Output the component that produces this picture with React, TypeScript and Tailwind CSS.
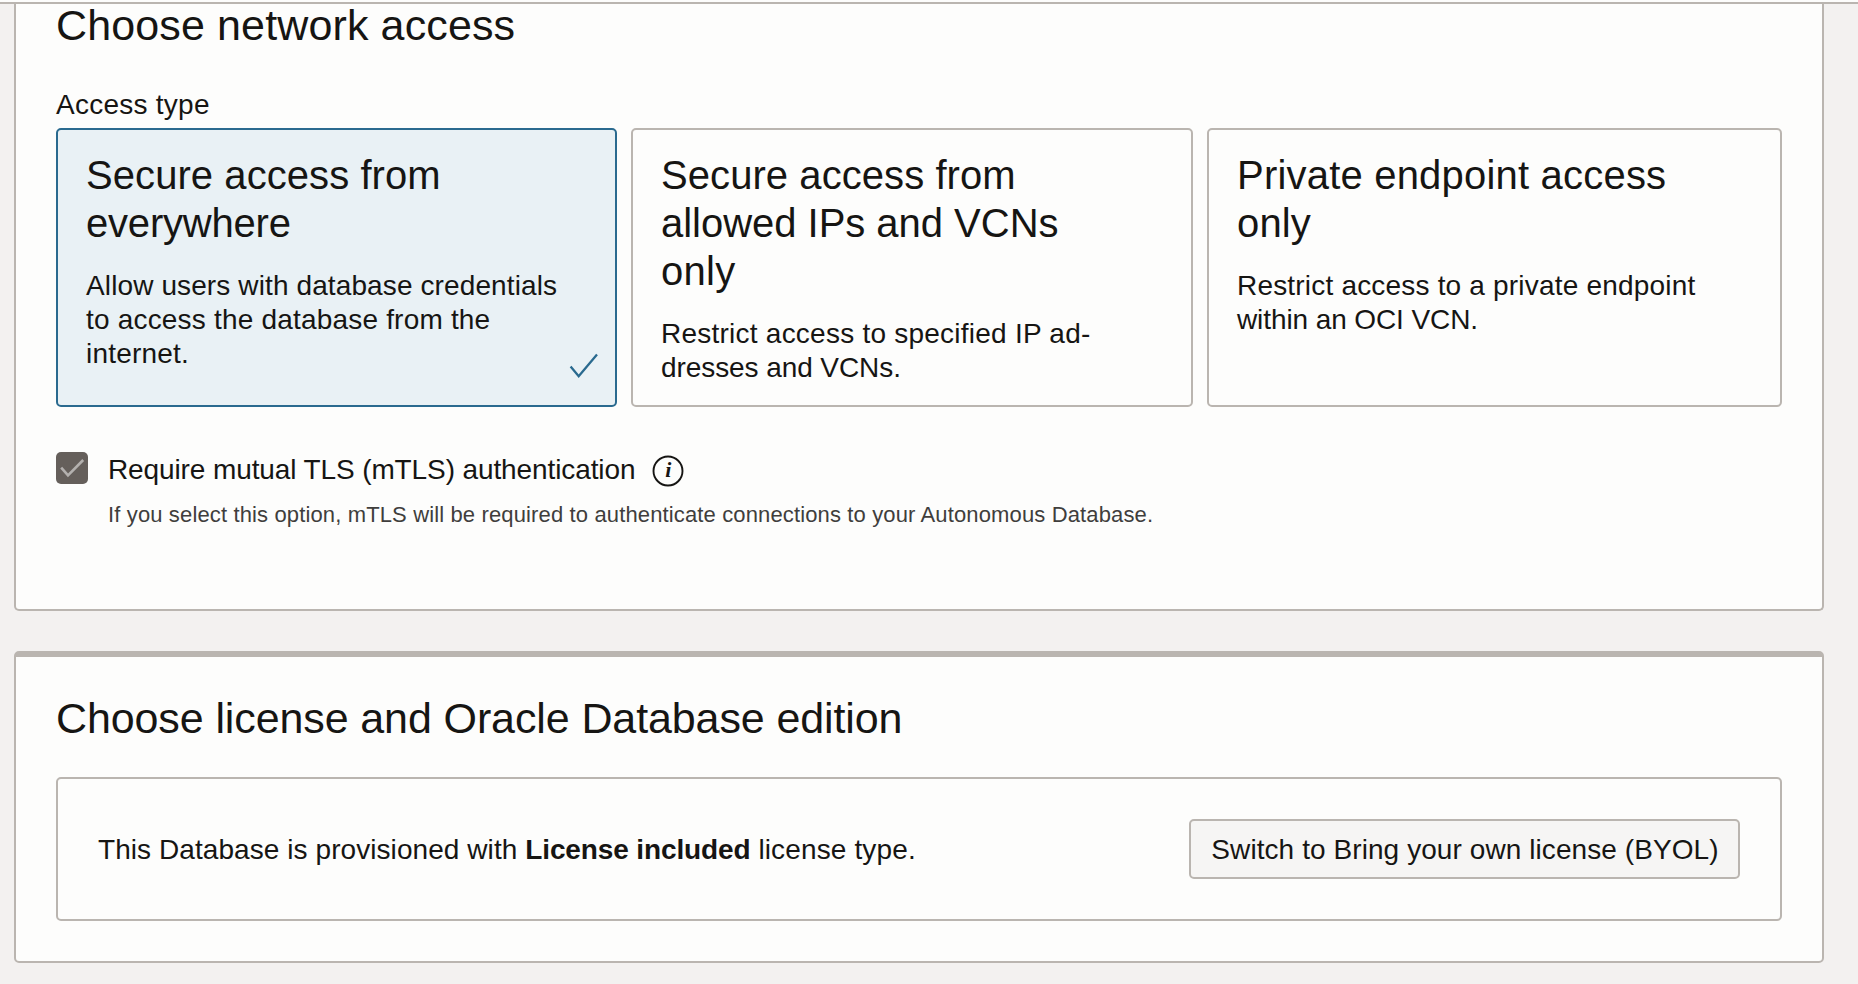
import React from "react";

type Line = { text: string; className: string };

type AccessOption = {
  title: Line[];
  description: Line[];
  width: string;
  selected?: boolean;
};

const accessOptions: AccessOption[] = [
  {
    title: [
      { text: "Secure access from", className: "tracking-[0.07px]" },
      { text: "everywhere", className: "tracking-[-0.2px]" },
    ],
    description: [
      { text: "Allow users with database credentials", className: "tracking-[0.115px]" },
      { text: "to access the database from the", className: "tracking-[0.191px]" },
      { text: "internet.", className: "tracking-[0.2px]" },
    ],
    width: "w-[561px]",
    selected: true,
  },
  {
    title: [
      { text: "Secure access from", className: "tracking-[0.07px]" },
      { text: "allowed IPs and VCNs", className: "tracking-[-0.025px]" },
      { text: "only", className: "tracking-[0.25px]" },
    ],
    description: [
      { text: "Restrict access to specified IP ad-", className: "tracking-[0.238px]" },
      { text: "dresses and VCNs.", className: "tracking-[-0.08px]" },
    ],
    width: "w-[562px]",
  },
  {
    title: [
      { text: "Private endpoint access", className: "tracking-[0.2px]" },
      { text: "only", className: "tracking-[0.15px]" },
    ],
    description: [
      { text: "Restrict access to a private endpoint", className: "tracking-[0.19px]" },
      { text: "within an OCI VCN.", className: "tracking-[-0.1px]" },
    ],
    width: "w-[575px]",
  },
];

function Lines({ lines }: { lines: Line[] }) {
  return (
    <>
      {lines.map((line) => (
        <span key={line.text} className={`block whitespace-nowrap ${line.className}`}>
          {line.text}
        </span>
      ))}
    </>
  );
}

function AccessCard({ option }: { option: AccessOption }) {
  const colors = option.selected
    ? "border-[#2a6a8f] bg-[#e9f1f5]"
    : "border-[#bab5b0] bg-[#fdfdfc]";
  return (
    <button
      type="button"
      className={`relative flex flex-col items-start rounded-[5px] border-2 pt-[21px] pl-7 text-left ${option.width} ${colors}`}
    >
      <h3 className="text-[40px] leading-[48px]">
        <Lines lines={option.title} />
      </h3>
      <p className="mt-[22px] text-[28px] leading-[34px]">
        <Lines lines={option.description} />
      </p>
      {option.selected && (
        <svg
          className="absolute right-[16px] bottom-[25px] h-[28px] w-[30px]"
          viewBox="0 0 30 28"
          fill="none"
          stroke="#2a6a8f"
          strokeWidth="2.3"
        >
          <path d="M1.6 14.4 9.7 24.2 28 2.4" />
        </svg>
      )}
    </button>
  );
}

function InfoIcon() {
  return (
    <svg className="h-8 w-8" viewBox="0 0 32 32">
      <circle cx="16" cy="16" r="14.5" fill="none" stroke="#161513" strokeWidth="1.9" />
      <text
        x="16.2"
        y="22.4"
        textAnchor="middle"
        className="fill-[#161513] font-['Liberation_Serif',serif] text-[22px] font-bold italic"
      >
        i
      </text>
    </svg>
  );
}

export default function App() {
  return (
    <div className="flex h-[984px] w-[1858px] flex-col overflow-hidden bg-[#f3f1f0] font-['Liberation_Sans',Arial,sans-serif] text-[#161513]">
      <header className="h-1 shrink-0 border-b-2 border-[#bab5b0] bg-[#fdfdfc]" />
      <main className="flex flex-col gap-10 pr-[34px] pl-[14px]">
        <section className="h-[607px] rounded-b-[5px] border-2 border-t-0 border-[#bab5b0] bg-[#fdfdfc] px-10">
          <h2 className="text-[43px] leading-[42px] tracking-[0.13px]">Choose network access</h2>
          <p className="mt-[42px] text-[28px] leading-[34px] tracking-[0.25px]">Access type</p>
          <div className="mt-[6px] flex h-[279px] gap-[14px]">
            {accessOptions.map((option) => (
              <AccessCard key={option.title[0].text + option.title[1].text} option={option} />
            ))}
          </div>
          <div className="mt-[45px] flex items-start">
            <div className="flex h-8 w-8 items-center justify-center rounded-[5px] bg-[#655f5b]">
              <svg className="h-8 w-8" viewBox="0 0 32 32" fill="none" stroke="#b3b0ae" strokeWidth="2.6">
                <path d="M5.2 15.6 12 23.4 27.2 8" />
              </svg>
            </div>
            <div className="ml-5">
              <div className="mt-px flex h-[34px] items-center">
                <span className="text-[28px] leading-[34px] tracking-[-0.11px]">
                  Require mutual TLS (mTLS) authentication
                </span>
                <span className="mt-[2px] ml-[17px]">
                  <InfoIcon />
                </span>
              </div>
              <p className="mt-[14px] text-[22px] leading-[28px] tracking-[0.136px] text-[#403e3c]">
                If you select this option, mTLS will be required to authenticate connections to your Autonomous
                Database.
              </p>
            </div>
          </div>
        </section>

        <section className="h-[312px] rounded-[5px] border-2 border-t-[6px] border-[#bab5b0] bg-[#fdfdfc] px-10 pt-[37px]">
          <h2 className="text-[43px] leading-[48px] tracking-[-0.11px]">
            Choose license and Oracle Database edition
          </h2>
          <div className="mt-[35px] flex h-[144px] items-center justify-between rounded-[5px] border-2 border-[#bab5b0] px-10">
            <p className="mt-[2px] text-[28px] leading-[34px] tracking-[0.07px]">
              This Database is provisioned with{" "}
              <strong className="font-bold tracking-[-0.12px]">License included</strong>{" "}
              <span className="tracking-[0.14px]">license type.</span>
            </p>
            <button
              type="button"
              className="flex h-[60px] w-[551px] items-center justify-center rounded-[5px] border-2 border-[#bab5b0] bg-[#f6f5f4] pt-[2px] pl-px text-[28px] leading-[34px] tracking-[0.08px] whitespace-nowrap"
            >
              Switch to Bring your own license (BYOL)
            </button>
          </div>
        </section>
      </main>
    </div>
  );
}
